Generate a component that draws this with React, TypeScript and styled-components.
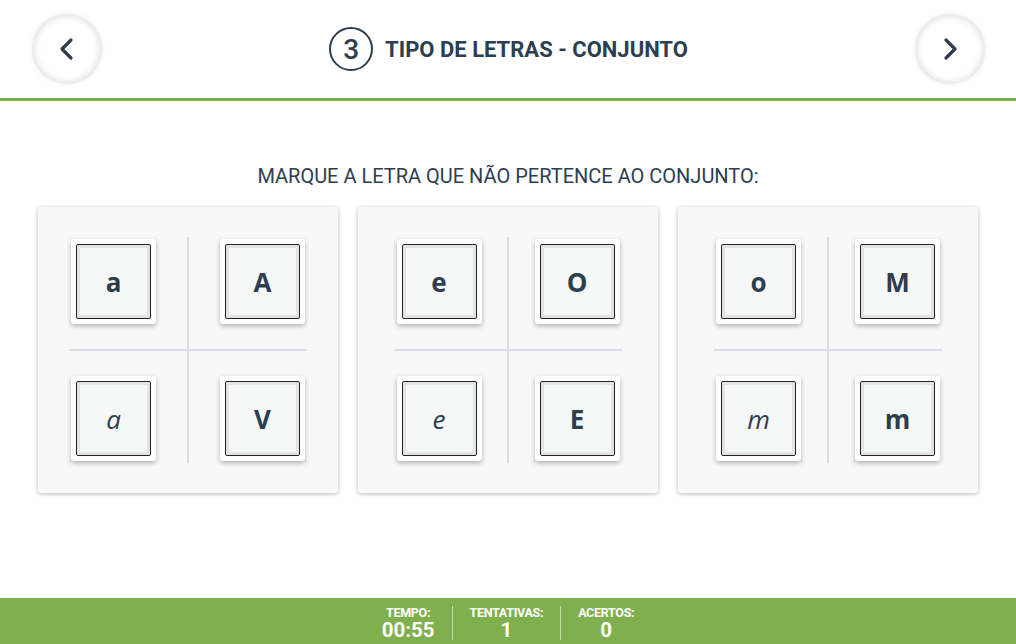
import React from 'react'
import styled, { createGlobalStyle } from 'styled-components'

const INK = '#2c3e50'
const GREEN = '#80b04e'

const GlobalStyle = createGlobalStyle`
  html, body {
    margin: 0;
    padding: 0;
    background: #fff;
  }

  body {
    font-family: Roboto, 'Liberation Sans', sans-serif;
    color: ${INK};
  }
`

const Page = styled.div`
  width: 1016px;
  height: 644px;
  display: flex;
  flex-direction: column;
  overflow: hidden;
`

const Header = styled.header`
  height: 98px;
  border-bottom: 3px solid ${GREEN};
  display: flex;
  align-items: center;
  justify-content: space-between;
  padding: 0 31px 0 32px;
  flex-shrink: 0;
`

const NavButton = styled.button`
  width: 70px;
  height: 70px;
  border: none;
  border-radius: 50%;
  background: #fff;
  padding: 0;
  display: flex;
  align-items: center;
  justify-content: center;
  box-shadow: inset 0 0 7px 2px rgba(0, 0, 0, 0.12), 0 0 5px rgba(0, 0, 0, 0.08);
  cursor: pointer;
`

const Title = styled.h1`
  margin: 0;
  display: flex;
  align-items: center;
  gap: 12px;
  font-size: 22px;
  font-weight: 700;
  color: ${INK};
`

const StepBadge = styled.span`
  width: 40px;
  height: 40px;
  border: 2px solid ${INK};
  border-radius: 50%;
  display: flex;
  align-items: center;
  justify-content: center;
  font-size: 28px;
  font-weight: 500;
`

const Main = styled.main`
  flex: 1;
  display: flex;
  flex-direction: column;
  align-items: center;
  padding-top: 63px;
`

const Prompt = styled.p`
  margin: 0 0 19px;
  font-size: 20px;
  line-height: 24px;
  font-weight: 400;
  color: ${INK};
`

const Cards = styled.div`
  display: flex;
  gap: 20px;
`

const Card = styled.section`
  width: 300px;
  height: 286px;
  box-sizing: border-box;
  background: #f8f8f8;
  border-radius: 2px;
  box-shadow: 0 1px 4px rgba(0, 0, 0, 0.28);
  display: flex;
  align-items: center;
  justify-content: center;
`

const Quad = styled.div<{ $gap: number }>`
  position: relative;
  display: grid;
  grid-template-columns: 85px 85px;
  grid-template-rows: 85px 85px;
  column-gap: ${(p) => p.$gap}px;
  row-gap: 52px;

  &::before {
    content: '';
    position: absolute;
    left: 50%;
    top: -2px;
    bottom: -2px;
    width: 2px;
    margin-left: -1px;
    background: #dcdce8;
  }

  &::after {
    content: '';
    position: absolute;
    top: 50%;
    left: -2px;
    right: -2px;
    height: 2px;
    margin-top: -1px;
    background: #dcdce8;
  }
`

const Tile = styled.button`
  position: relative;
  z-index: 1;
  width: 85px;
  height: 85px;
  padding: 5px;
  box-sizing: border-box;
  border: none;
  border-radius: 3px;
  background: #fff;
  box-shadow: 0 2px 5px rgba(0, 0, 0, 0.3);
  cursor: pointer;
  display: flex;
`

const TileFace = styled.span<{ $script?: boolean }>`
  flex: 1;
  display: flex;
  align-items: center;
  justify-content: center;
  border: 1px solid #2a1f1c;
  border-radius: 2px;
  background: #f6f7f7;
  box-shadow: inset 0 0 0 3px #e2e5e5;
  color: ${INK};
  font-family: 'Open Sans', 'Noto Sans', sans-serif;
  font-style: ${(p) => (p.$script ? 'italic' : 'normal')};
  font-weight: ${(p) => (p.$script ? 400 : 700)};
  font-size: 26px;
  line-height: 1;
`

const Footer = styled.footer`
  height: 46px;
  box-sizing: border-box;
  padding-top: 4px;
  background: ${GREEN};
  display: flex;
  justify-content: center;
  align-items: center;
  flex-shrink: 0;
`

const Stat = styled.div`
  display: flex;
  flex-direction: column;
  align-items: center;
  padding: 0 17px;
  color: #fff;
  font-weight: 700;

  & + & {
    border-left: 1px solid rgba(255, 255, 255, 0.55);
  }
`

const StatLabel = styled.span`
  font-size: 12.5px;
  line-height: 14px;
  letter-spacing: -0.3px;
`

const StatValue = styled.span`
  font-size: 20.5px;
  line-height: 20px;
`

const Chevron = ({ dir }: { dir: 'left' | 'right' }) => (
  <svg width="22" height="24" viewBox="0 0 22 24" fill="none">
    <path
      d={dir === 'left' ? 'M15 3 L6 12 L15 21' : 'M7 3 L16 12 L7 21'}
      stroke={INK}
      strokeWidth="3.2"
      strokeLinecap="round"
      strokeLinejoin="round"
    />
  </svg>
)

type Letter = { char: string; script?: boolean }

const sets: { gap: number; letters: Letter[] }[] = [
  { gap: 64, letters: [{ char: 'a' }, { char: 'A' }, { char: 'a', script: true }, { char: 'V' }] },
  { gap: 53, letters: [{ char: 'e' }, { char: 'O' }, { char: 'e', script: true }, { char: 'E' }] },
  { gap: 54, letters: [{ char: 'o' }, { char: 'M' }, { char: 'm', script: true }, { char: 'm' }] },
]

const stats = [
  { label: 'TEMPO:', value: '00:55' },
  { label: 'TENTATIVAS:', value: '1' },
  { label: 'ACERTOS:', value: '0' },
]

export default function App() {
  return (
    <Page>
      <GlobalStyle />
      <Header>
        <NavButton aria-label="Anterior">
          <Chevron dir="left" />
        </NavButton>
        <Title>
          <StepBadge>3</StepBadge>
          TIPO DE LETRAS - CONJUNTO
        </Title>
        <NavButton aria-label="Próximo">
          <Chevron dir="right" />
        </NavButton>
      </Header>

      <Main>
        <Prompt>MARQUE A LETRA QUE NÃO PERTENCE AO CONJUNTO:</Prompt>
        <Cards>
          {sets.map((set, i) => (
            <Card key={i}>
              <Quad $gap={set.gap}>
                {set.letters.map((l, j) => (
                  <Tile key={j}>
                    <TileFace $script={l.script}>{l.char}</TileFace>
                  </Tile>
                ))}
              </Quad>
            </Card>
          ))}
        </Cards>
      </Main>

      <Footer>
        {stats.map((s) => (
          <Stat key={s.label}>
            <StatLabel>{s.label}</StatLabel>
            <StatValue>{s.value}</StatValue>
          </Stat>
        ))}
      </Footer>
    </Page>
  )
}
